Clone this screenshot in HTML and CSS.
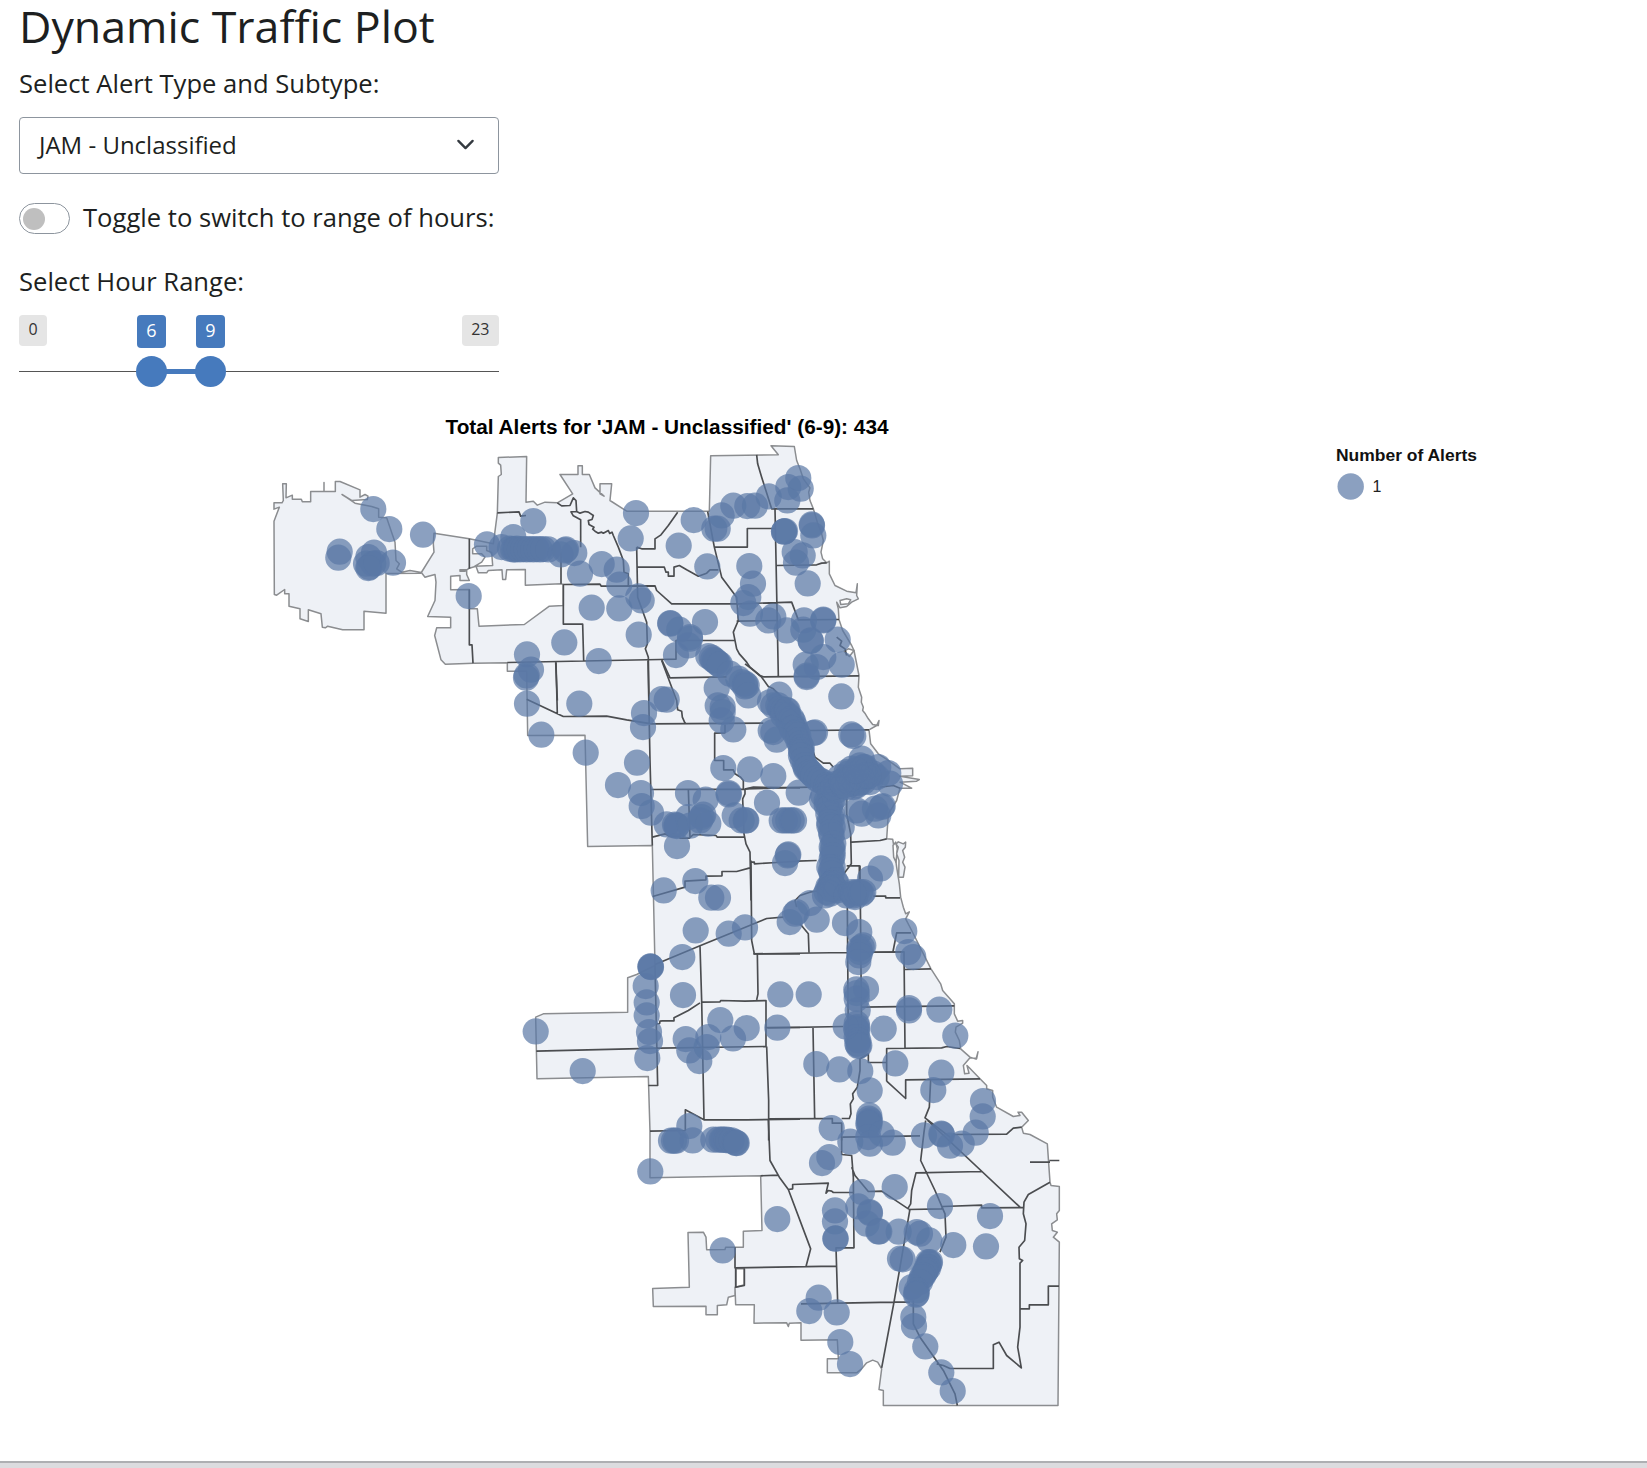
FILE: index.html
```html
<!DOCTYPE html>
<html lang="en">
<head>
<meta charset="utf-8">
<title>Dynamic Traffic Plot</title>
<link rel="stylesheet" href="styles.css">
</head>
<body>
<main class="page">
  <h2 class="title">Dynamic Traffic Plot</h2>
  <section class="controls">
    <label class="label">Select Alert Type and Subtype:</label>
    <div class="select"><span>JAM - Unclassified</span>
      <svg class="chevron" viewBox="0 0 16 16"><path d="m2 5 6 6 6-6"/></svg>
    </div>
    <div class="toggle-row"><span class="switch"><i class="knob"></i></span><span class="label">Toggle to switch to range of hours:</span></div>
    <label class="label hour-label">Select Hour Range:</label>
    <div class="slider">
      <span class="limit">0</span><span class="limit">23</span>
      <i class="track"></i><i class="bar"></i>
      <b class="value from">6</b><b class="value to">9</b>
      <i class="handle from"></i><i class="handle to"></i>
    </div>
  </section>
  <svg class="plot" viewBox="0 400 1647 1061">
    <text class="plot-title" x="445.5" y="434" textLength="443" lengthAdjust="spacingAndGlyphs">Total Alerts for 'JAM - Unclassified' (6-9): 434</text>
    <g transform="translate(460 400.5) scale(.33333)">
      <path class="area" d="M-558 362L-542 320-558 326V307H-534L-530 300-532 250H-521L-522 292-503 284V296H-476L-473 304H-448V273H-408V246V273H-374V243H-360L-300 268V290L-285 282-276 287-278 297-325 300-354 282-315 308-265 318-244 325V350L-220 352-195 425-192 480-182 490-190 505-175 515-150 510-116 516-117 518-222 519V638L-288 632V688H-352L-397 677-404 682-413 680-417 640-455 628V663L-480 655V625L-513 617V580H-526V567L-550 584-557 582Z"/>
      <path class="area" d="M-78 398L28 415 100 430 112 338 115 228 124 222 122 194 115 188 115 171 200 168 198 305 220 302 232 314 255 305 292 307 338 280 300 222 354 222 354 196 367 196 367 222 388 222 405 262 432 287 420 280 420 250 455 250 450 300 500 332 748 332 752 166 955 163 933 136 1003 138 1010 180 1020 205 1030 235 1050 262 1046 275 1050 300 1060 325 1072 365 1085 400 1090 420 1083 455 1088 475 1100 487 1108 482 1108 520 1125 555 1160 572 1188 577 1192 550 1190 585 1195 595 1175 605 1160 618 1140 622 1130 605 1135 625 1137 657 1148 690 1175 735 1182 750 1197 825 1195 860 1205 890 1204 905 1210 920 1208 930 1216 940 1225 955 1238 972 1255 975 1257 960 1250 975 1227 988 1232 1030 1255 1060 1285 1080 1320 1105 1358 1103 1358 1126 1320 1127 1378 1137 1370 1142 1320 1145 1355 1163 1320 1163 1310 1200 1285 1240 1280 1315 1298 1316 1302 1340 1310 1400 1318 1450 1322 1490 1330 1520 1337 1540 1348 1534 1337 1555 1355 1590 1380 1640 1413 1705 1442 1750 1448 1770 1483 1810 1483 1840 1493 1862 1508 1860 1508 1868 1488 1880 1486 1895 1498 1920 1502 1945 1530 1970 1548 1976 1554 1954 1550 1974 1530 1972 1510 1995 1514 2020 1527 2018 1521 1995 1528 2002 1560 2035 1580 2055 1580 2065 1598 2070 1598 2090 1610 2120 1660 2148 1680 2145 1674 2135 1685 2135 1705 2160 1685 2180 1690 2198 1710 2202 1762 2230 1770 2345 1773 2355 1798 2358 1798 2430 1790 2440 1792 2458 1775 2470 1777 2490 1792 2495 1780 2510 1798 2525 1794 3015 1270 3015 1270 2970 1257 2967 1265 2905 1253 2885 1238 2879 1220 2887 1205 2905 1190 2917 1102 2917 1102 2875 1135 2875 1132 2818 1023 2819 1023 2767 988 2768 985 2778 980 2767 882 2768 883 2713 827 2713 825 2660 825 2685 805 2690 800 2713 772 2715 772 2743 738 2743 738 2717 580 2718 578 2664 688 2660 684 2496 730 2495 738 2510 740 2548 795 2547 797 2540 850 2540 850 2492 906 2490 902 2326 570 2332 570 2192 565 2028 231 2035 227 1850 250 1840 503 1835 503 1732 530 1722 585 1695 577 1335 383 1338 375 1004 203 1005 200 812 142 812 142 787 40 788-44 791-57 778-76 705-70 682-28 682-28 650-97 648-75 600-72 545-75 522-95 527-105 530-116 516-78 455-80 430Z"/>
      <path class="area gap" d="M-28 527L0 525 0 540 28 540 20 522 20 508 0 508 0 512 15 512 28 503 48 497 55 517 80 517 85 510 126 508 128 537 137 537 140 508 196 507 196 554 303 550 310 552 310 615 268 617 193 672 57 677 52 625 28 625 28 567-28 568Z"/>
      <path class="area gap" d="M38 445L50 437 80 437 80 450 95 456 98 495 45 497 65 485 75 470 65 460H38ZM828 2605V2660L853 2653V2605ZM1140 600L1160 595 1172 598 1165 610 1142 612ZM1152 752L1165 745 1182 750 1168 768ZM1299 1335L1307 1325 1312 1345 1308 1385 1301 1370Z"/>
      <path class="area" d="M1308 1330L1315 1324 1330 1330 1337 1325 1336 1340 1328 1350 1334 1370 1328 1385 1335 1400 1330 1430H1316L1317 1380 1310 1360 1315 1340Z"/>
      <path class="border" d="M28 415V505M112 337L177 334 182 347 198 345M292 307L305 316 330 315 340 292 348 300 350 333 360 338 375 333 385 335 400 345 396 357 385 360 387 372 402 380 398 386 405 392 415 398 425 395 430 398 445 390 449 399 456 395 460 405 475 440 490 480 492 515 505 520V557M350 333L333 334 340 346 362 358V440M303 550V455M310 552L420 551 424 557 585 556 590 570 635 610H835M310 552V671H368L371 780M28 567V733H36L39 788M142 786L600 777 648 776V720H825M530 440L545 445H585V415L603 403 625 375 653 335M530 440L533 590 560 665 562 730 556 745 565 770 567 900M533 500H613L618 515 625 515V527H642V500L658 495 680 508 715 527 740 518 750 508 775 508M743 333L763 440 785 530 830 590 835 660 820 695 830 745 838 760 860 785 870 800 900 825M763 440H862V384H945M890 163L893 190 905 230 935 325H1060M945 325L955 827M949 495L1070 493 1085 488 1100 487M835 610L995 605 1015 658 1137 657M900 825L910 829 1197 826M605 777L630 832 800 829M287 784L292 900M1130 710L1145 722 1140 735 1155 745 1160 765"/>
    </g>
    <g class="border" transform="translate(500 600.5) scale(.33333)"><path d="M168 185L172 342M80 296L190 348 320 347 380 358 455 370 790 368M444 180L450 480 457 735M485 180L530 300 533 328 545 332 547 350 556 370M675 370V397L644 398V480H671V508H700L705 520 722 530 730 540V565M455 567L735 566 760 560 900 562M735 566L735 580 728 595 732 700 738 730 750 755 753 900M565 567L570 710M457 710L495 700 510 708 540 708V713H568L580 702 648 705 652 710H732M458 888L555 860V842L618 838V827L666 826V813H710L750 802M750 785H763V790L830 786 900 782"/></g>
    <g class="border" transform="translate(720 600.5) scale(.33333)"><path d="M75 190L95 205 125 230 145 258 160 265 250 360 285 470 310 488 330 488 340 500M270 390L447 388M75 565L270 560M395 725L480 720 500 715M380 595V640L392 700 394 790 370 822M380 796H418V850M460 887L497 887V892L540 892M480 560L520 555 540 563M230 782L290 780M50 62L172 60"/></g>
    <g class="border" transform="translate(500 840.5) scale(.33333)"><path d="M753 60L755 300 763 340H900M465 372L600 316 800 234 850 230M600 316L605 480 612 838M605 485L660 484 662 480 735 482 798 480V618M772 340L774 460 770 478M470 550L479 549 480 542 487 541H522V532L565 510 600 487M109 632L480 623 800 618M800 618L803 700 806 780V900M465 375L473 735H445M450 872L556 870V808L612 838 740 838 900 836M800 561H900"/></g>
    <g class="border" transform="translate(720 840.5) scale(.33333)"><path d="M100 340L382 336M382 200L385 600M420 75L425 600M240 250L265 280 267 335M142 562L370 558M279 562L284 833M145 835L337 834V848H365V900M365 834H388L393 820 391 790 400 775 398 760 412 740 420 690V655L445 640V666H500M425 335L552 334 555 622M519 333L530 277H573M555 387L633 385M425 500L703 496M500 722V624L665 622 680 618 720 624M500 722L557 774V718L780 715M632 718L628 800 615 832 690 890M230 200L225 180 240 165 270 155 300 150"/></g>
    <g class="border" transform="translate(620 1080.5) scale(.33333)"><path d="M445 117L450 240 478 290 505 327 572 505 558 558M422 286L475 284M505 327L518 325V312L625 308 618 338 625 330 635 332 640 336H698M665 168V222L695 225 700 290 702 502H648L653 665M668 170L900 166M695 260L705 285 745 333 785 332 865 385M345 500V562L648 557M373 565V615L347 620V562M543 670L822 665H870M822 665L785 862M870 385L822 665"/></g>
    <g class="border" transform="translate(820 1060.5) scale(.33333)"><path d="M265 447L365 445 368 438 485 434V442L612 441M263 445L272 430 275 390 288 337 485 333M323 180L600 440M317 180L312 215 302 300 345 390 375 460 378 530 360 575M400 222L560 221 580 203 605 200M690 365L625 402 612 425 610 460 618 490 614 540 597 560 598 595 608 600 600 608V800L593 860 604 922 560 885 537 845 520 853V924L390 924 370 915 350 910M600 745H628V733H685V677H717M280 720V790L300 830 370 930 405 1000 412 1035M630 305H690M688 300H718"/></g>
    <g id="alerts"></g>
    <text class="legend-title" x="1336" y="460.5" textLength="141" lengthAdjust="spacingAndGlyphs">Number of Alerts</text>
    <circle class="alert" cx="1350.7" cy="486.5" r="13.2"/>
    <text class="legend-value" x="1372.5" y="492">1</text>
  </svg>
  <footer class="bottom"></footer>
</main>
<script src="alerts.js"></script>
</body>
</html>
```
FILE: styles.css
```css
* { box-sizing: border-box; }
body { margin: 0; background: #fff; color: #1d1f21; font-family: "Open Sans", sans-serif; }
.page { display: flex; flex-direction: column; height: 1468px; }
.title { margin: 0; padding: 0 0 0 19px; height: 65px; line-height: 52px; font-size: 44.7px; font-weight: 400; white-space: nowrap; }
.controls { display: flex; flex-direction: column; width: 480px; margin-left: 19px; height: 335px; white-space: nowrap; }
.label { font-size: 25.6px; line-height: 38px; }
.select { display: flex; align-items: center; justify-content: space-between; height: 57px; margin-top: 14px; padding: 0 23px 2px 19px; border: 1px solid #8d959e; border-radius: 4px; font-size: 24px; }
.chevron { width: 19px; height: 19px; fill: none; stroke: #343a40; stroke-width: 2; stroke-linecap: round; stroke-linejoin: round; }
.toggle-row { display: flex; align-items: center; gap: 13px; height: 38px; margin-top: 25px; }
.switch { flex: none; width: 51px; height: 31px; padding: 4px 4px 4px 3px; border: 1px solid #8d959e; border-radius: 16px; }
.knob { display: block; width: 22px; height: 22px; border-radius: 50%; background: #bfbfbf; }
.hour-label { margin-top: 26px; }
.slider { position: relative; display: flex; justify-content: space-between; height: 80px; margin-top: 14px; }
.limit { height: 31px; padding: 0 9.5px; border-radius: 4px; background: #e5e5e5; color: #333; font-size: 16px; line-height: 29px; }
.track { position: absolute; left: 0; top: 56px; width: 100%; height: 1px; background: #555; }
.bar { position: absolute; left: 132px; top: 54px; width: 59px; height: 5px; background: #467abd; }
.value { position: absolute; top: 0; width: 29px; height: 33px; border-radius: 4px; background: #467abd; color: #fff; font-size: 18px; font-weight: 400; line-height: 31px; text-align: center; }
.value.from { left: 118px; }
.value.to { left: 177px; }
.handle { position: absolute; top: 41px; width: 31px; height: 31px; border-radius: 50%; background: #467abd; }
.handle.from { left: 117px; }
.handle.to { left: 176px; }
.plot { display: block; width: 1647px; height: 1061px; flex: none; font-family: "Liberation Sans", Arial, sans-serif; }
.area { fill: #eef1f6; stroke: #8b8d90; stroke-width: 4.5; stroke-linejoin: round; }
.gap { fill: #fff; }
.border { fill: none; stroke: #4b4d50; stroke-width: 5; stroke-linejoin: round; }
.alert { fill: #5a78a5; fill-opacity: .7; }
.plot-title { font-size: 20.7px; font-weight: 700; fill: #000; }
.legend-title { font-size: 17.4px; font-weight: 700; fill: #111; }
.legend-value { font-size: 16px; fill: #222; }
.bottom { height: 7px; border-top: 2px solid #aeafb2; background: #dcdcdf; }
```
FILE: alerts.js
```js
// Alert positions grouped by map sheet; each sheet has an origin and a 1/3 px grid.
const sheets = [
  [260, 400, "340,326 388,386 489,403 239,454 235,472 342,457 325,470 318,490 328,500 340,490 325,503 350,488 399,487 626,587"],
  [460, 400, "81,432 160,410 220,362 125,440 150,445 160,447 165,447 170,445 180,447 190,446 200,447 210,446 220,447 230,446 240,447 250,446 265,447 302,462 318,447 315,450 343,458 360,520 425,491 470,508 478,553 528,338 512,414 535,588 545,600 395,622 478,624 536,703 313,726 416,782 631,668 631,670 658,688 690,710 690,715 735,665 648,764 685,735 701,359 656,436 742,498 201,762 213,808 200,825 198,832"],
  [660, 400, "185,345 163,385 173,385 220,316 262,317 285,316 326,288 385,260 415,233 422,265 382,300 372,393 372,394 375,392 455,372 456,375 460,405 404,455 428,465 408,487 443,549 268,497 279,550 265,590 250,608 270,640 325,660 340,648 380,690 432,660 430,688 490,660 490,658 452,720 452,722 533,718 545,793 490,770 437,793 470,800 440,826 440,830"],
  [500, 600, "625,167 635,172 645,180 655,190 650,185 640,178 660,192 690,220 715,235 725,245 735,250 740,255 735,258 745,285 650,263 653,315 668,320 668,335 665,360 700,387 432,338 429,380 485,296 500,298 81,310 238,310 124,403 257,457 411,487 354,554 423,578 425,617 453,637 564,578 617,598 670,503 750,507 820,527 686,578 686,582 801,607 500,672 525,673 530,675 530,677 565,650 570,676 605,650 610,643 625,670 600,660 704,645 725,660 737,660 739,660 531,737 586,842 491,870 634,892 654,892"],
  [720, 600, "364,288 178,283 150,305 160,315 175,315 180,325 190,330 200,330 205,345 190,345 205,362 215,355 220,365 203,330 225,380 215,385 230,395 225,400 235,405 235,420 240,430 245,440 243,450 245,455 243,465 248,480 255,495 258,505 262,505 270,515 275,520 280,525 290,535 300,540 310,545 320,555 325,560 330,575 310,585 306,597 320,600 335,605 320,615 330,620 335,640 325,640 328,665 335,655 338,680 328,675 335,705 333,695 340,730 338,750 335,740 335,775 338,765 338,800 328,800 335,820 333,810 345,840 330,855 335,850 152,390 160,395 170,418 285,396 280,398 394,402 400,407 236,577 185,660 195,660 205,660 215,660 222,660 205,762 195,788 203,765 425,475 395,505 385,520 370,540 360,530 400,530 410,520 420,510 430,500 440,530 430,545 410,555 450,545 415,530 460,520 400,560 425,535 440,510 475,500 505,518 510,550 470,530 350,550 350,570 345,590 340,560 380,515 385,540 395,550 380,560 405,545 418,548 435,525 420,495 390,535 370,555 435,500 445,525 365,545 408,510 410,630 425,640 475,645 485,620 488,617 465,625 365,680 482,804 450,835"],
  [720, 840, "325,140 335,130 345,145 340,140 350,150 350,130 320,155 330,160 315,165 330,145 380,165 395,155 400,165 405,170 410,155 420,155 425,160 430,155 400,160 270,188 290,238 209,245 225,220 230,215 375,248 418,275 430,315 425,320 418,325 420,335 418,345 415,365 553,272 565,335 580,350 181,462 266,462 172,562 409,447 438,446 410,458 410,475 413,510 410,550 412,560 408,565 412,570 410,590 415,600 412,610 415,617 418,615 377,558 491,565 567,503 567,510 658,508 706,586 289,671 358,687 421,692 449,750 526,669 664,697 640,749 789,782 788,828 767,877 335,863"],
  [500, 840, "587,270 686,280 735,261 547,350 451,378 453,380 452,379 549,464 437,437 440,486 440,525 447,575 450,602 442,653 107,573 248,692 661,539 740,563 699,594 557,596 625,590 568,630 620,620 598,662 568,857"],
  [620, 1080, "153,181 162,181 168,181 218,180 280,178 295,178 305,178 310,178 320,178 325,180 335,180 345,185 348,188 350,188 91,273 606,248 628,230 691,184 824,320 726,335 645,390 645,423 646,474 647,475 715,378 749,395 750,398 740,430 775,453 778,453 836,454 840,535 848,537 472,416 308,510 596,652 568,692 650,696 661,785 690,851"],
  [820, 1060, "148,165 147,175 148,185 148,195 150,180 145,190 145,230 150,250 185,220 218,247 312,225 364,220 366,222 390,256 425,250 360,437 510,467 498,558 400,554 290,515 300,520 328,540 325,605 330,605 328,610 322,618 325,622 318,630 315,635 310,645 305,650 275,680 300,665 290,690 290,700 288,703 280,770 282,797 316,858 364,936 398,992"]
];
const layer = document.getElementById("alerts");
for (const [ox, oy, points] of sheets) {
  for (const point of points.split(" ")) {
    const [x, y] = point.split(",").map(Number);
    const dot = document.createElementNS("http://www.w3.org/2000/svg", "circle");
    dot.setAttribute("class", "alert");
    dot.setAttribute("cx", (ox + x / 3).toFixed(1));
    dot.setAttribute("cy", (oy + .4 + y / 3).toFixed(1));
    dot.setAttribute("r", 13.1);
    layer.append(dot);
  }
}
```
